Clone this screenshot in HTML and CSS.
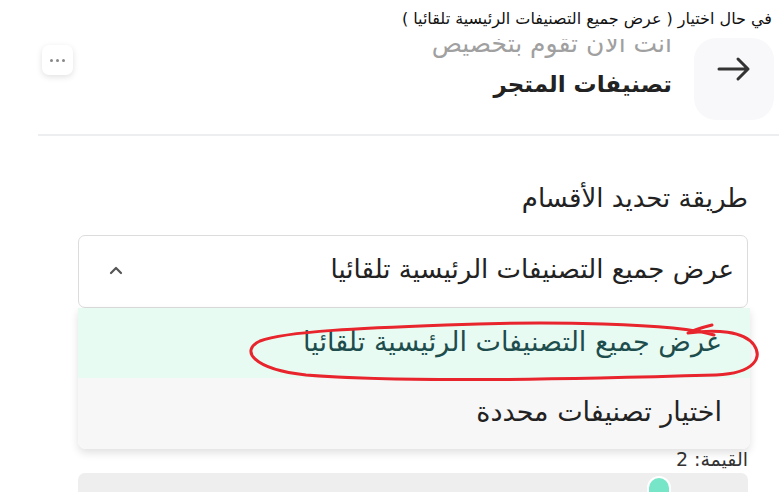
FILE: index.html
```html
<!DOCTYPE html>
<html lang="ar" dir="rtl">
<head>
<meta charset="utf-8">
<link rel="stylesheet" href="styles.css">
</head>
<body>
<div class="caption">في حال اختيار ( عرض جميع التصنيفات الرئيسية تلقائيا )</div>
<header class="header">
  <div class="back">
    <svg width="36" height="26" viewBox="0 0 36 26"><path d="M3 13 H32 M22 3 L32 13 L22 23" fill="none" stroke="#333" stroke-width="3" stroke-linecap="round" stroke-linejoin="round"/></svg>
  </div>
  <div class="titles">
    <div class="subtitle">انت الان تقوم بتخصيص</div>
    <div class="title">تصنيفات المتجر</div>
  </div>
  <div class="spacer"></div>
  <div class="more"><span></span><span></span><span></span></div>
</header>
<div class="divider"></div>
<main class="content">
  <div class="label">طريقة تحديد الأقسام</div>
  <div class="field">
    <div class="select">
      <span class="select-text">عرض جميع التصنيفات الرئيسية تلقائيا</span>
      <svg class="chev" width="14" height="9" viewBox="0 0 14 9"><path d="M2 7 L7 2 L12 7" fill="none" stroke="#555" stroke-width="2.2" stroke-linecap="round" stroke-linejoin="round"/></svg>
    </div>
    <div class="menu">
      <div class="option active">عرض جميع التصنيفات الرئيسية تلقائيا</div>
      <div class="option">اختيار تصنيفات محددة</div>
      <svg class="ring" width="520" height="64" viewBox="0 0 520 64"><path d="M468 18 C430 6 300 4 200 8 C120 11 40 14 14 24 C-6 33 6 52 60 58 C160 66 330 62 470 58 C510 56 516 40 508 28 C498 14 470 12 442 16 C450 12 458 10 466 8" fill="none" stroke="#e8242c" stroke-width="3" stroke-linecap="round" stroke-linejoin="round"/></svg>
    </div>
  </div>
  <div class="value">القيمة: 2</div>
  <div class="track"><div class="thumb"></div></div>
</main>
</body>
</html>
```
FILE: styles.css
```css
* { box-sizing: border-box; }
html, body { margin: 0; padding: 0; background: #fff; }
body {
  width: 779px;
  height: 492px;
  overflow: hidden;
  font-family: "DejaVu Sans", sans-serif;
  color: #222;
}
.caption {
  height: 36px;
  padding: 7px 7px 0 0;
  font-size: 16px;
  line-height: 24px;
  color: #111;
}
.header {
  display: flex;
  align-items: flex-start;
  height: 96px;
  padding-right: 5px;
  padding-left: 42px;
}
.back {
  width: 80px;
  height: 82px;
  margin-top: 2px;
  border-radius: 22px;
  background: #f8f8fa;
  display: flex;
  align-items: center;
  justify-content: center;
  padding-bottom: 20px;
}
.titles {
  margin-right: 22px;
  margin-top: 3px;
  height: 68px;
  overflow: hidden;
}
.subtitle {
  margin-top: -11px;
  font-size: 25px;
  color: #a0a0a0;
  line-height: 32px;
}
.title {
  margin-top: 8px;
  font-size: 23px;
  font-weight: bold;
  color: #222;
  line-height: 32px;
}
.spacer { flex: 1; }
.more {
  width: 31px;
  height: 30px;
  margin-top: 9px;
  border-radius: 7px;
  background: #fff;
  box-shadow: 0 2px 6px rgba(0,0,0,0.12);
  display: flex;
  align-items: center;
  justify-content: center;
  gap: 3px;
}
.more span {
  width: 3px; height: 3px; border-radius: 50%; background: #888;
}
.divider {
  height: 2px;
  background: #eceef0;
  margin-left: 38px;
  margin-top: 2px;
}
.content {
  padding: 42px 31px 0 29px;
  margin-left: 49px;
}
.label {
  font-size: 26px;
  line-height: 40px;
  color: #222;
}
.field {
  position: relative;
  margin-top: 17px;
}
.select {
  height: 73px;
  border: 1px solid #dcdcdc;
  border-radius: 7px;
  display: flex;
  align-items: center;
  padding: 0 13px 0 30px;
  background: #fff;
}
.select-text {
  flex: 1;
  font-size: 26px;
  color: #222;
  padding-bottom: 6px;
}
.chev { margin-bottom: 2px; }
.menu {
  position: absolute;
  top: 73px;
  right: -2px;
  left: 0;
  border-radius: 0 0 8px 8px;
  box-shadow: 0 4px 8px rgba(0,0,0,0.12);
  z-index: 2;
}
.option {
  height: 71px;
  display: flex;
  align-items: center;
  padding-right: 28px;
  font-size: 27px;
  background: #f7f7f7;
  color: #222;
  padding-bottom: 4px;
}
.option.active {
  background: #e8fbf3;
  color: #1d4d4d;
  height: 70px;
}
.option:last-of-type { border-radius: 0 0 8px 8px; }
.ring {
  position: absolute;
  top: 9px;
  right: -16px;
}
.value {
  margin-top: 141px;
  font-size: 19px;
  color: #333;
  line-height: 20px;
  position: relative;
  z-index: 1;
}
.track {
  margin-top: 4px;
  height: 26px;
  border-radius: 7px;
  background: #eeeeee;
  position: relative;
}
.thumb {
  position: absolute;
  top: 3px;
  left: 569px;
  width: 24px;
  height: 30px;
  border-radius: 12px;
  background: #77e6c8;
  border: 2px solid #fff;
}
```
